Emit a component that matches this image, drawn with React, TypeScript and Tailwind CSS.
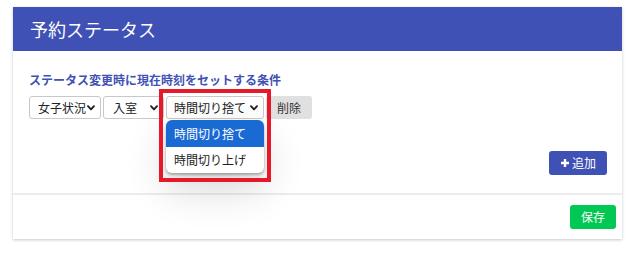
import React from "react";

const Chevron = () => (
  <svg width="8" height="6" viewBox="0 0 8 6" className="shrink-0">
    <polyline points="1,1.2 4,4.4 7,1.2" fill="none" stroke="#222" strokeWidth="1.9" strokeLinecap="round" strokeLinejoin="round" />
  </svg>
);

const Select = ({ label, w, pl }: { label: string; w: string; pl: string }) => (
  <div className={`${w} ${pl} h-[23px] shrink-0 flex items-center justify-between pr-[5px] bg-white border border-[#c8c8c8] rounded-[3px] text-[12px] text-[#222] leading-none whitespace-nowrap`}>
    <span className="whitespace-nowrap">{label}</span>
    <Chevron />
  </div>
);

export default function App() {
  return (
    <div className="w-[640px] h-[264px] bg-white pt-[7px] pl-[13px]" style={{ fontFamily: '"Noto Sans CJK JP", "Noto Sans", sans-serif' }}>
      <div className="w-[609px] h-[232px] flex flex-col bg-white shadow-[0_1px_3px_rgba(0,0,0,0.22)]">
        <div className="h-[44px] shrink-0 bg-[#3f51b5] flex items-center pl-[17px] text-white text-[18px] leading-none">
          予約ステータス
        </div>
        <div className="h-[142px] shrink-0 flex flex-col pl-[16px] pr-[15px] pt-[20px]">
          <div className="text-[12px] leading-[18px] font-bold text-[#3f51b5] whitespace-nowrap">ステータス変更時に現在時刻をセットする条件</div>
          <div className="mt-[7px] flex items-center gap-[2px]">
            <Select label="女子状況" w="w-[72px]" pl="pl-[8px]" />
            <Select label="入室" w="w-[61px]" pl="pl-[9px]" />
            <div className="relative shrink-0">
              <Select label="時間切り捨て" w="w-[98px]" pl="pl-[7px]" />
              <div className="absolute left-0 top-[24px] w-[98px] h-[53px] bg-white rounded-[6px] overflow-hidden shadow-[0_2px_3px_rgba(0,0,0,0.3),0_16px_40px_rgba(0,0,0,0.16)] text-[12px] leading-none z-10 whitespace-nowrap">
                <div className="h-[27px] bg-[#1a6ad4] text-white flex items-center pl-[8px]">時間切り捨て</div>
                <div className="h-[26px] text-[#222] flex items-center pl-[8px]">時間切り上げ</div>
              </div>
              <div className="absolute left-[-7px] top-[-7px] w-[112px] h-[93px] border-[4px] border-[#e5192a] z-20 pointer-events-none" />
            </div>
            <div className="w-[46px] h-[23px] shrink-0 bg-[#e0e0e0] rounded-[3px] flex items-center justify-center text-[12px] text-[#333] leading-none">削除</div>
          </div>
          <div className="mt-[32px] flex justify-end">
            <div className="w-[58px] h-[24px] bg-[#3f51b5] rounded-[3px] flex items-center justify-center gap-[2px] text-white text-[12px] leading-none">
              <svg width="10" height="10" viewBox="0 0 10 10">
                <path d="M5 1v8M1 5h8" stroke="#fff" strokeWidth="2.4" strokeLinecap="butt" />
              </svg>
              <span>追加</span>
            </div>
          </div>
        </div>
        <div className="flex-1 border-t-2 border-[#ececec] flex justify-end items-start pt-[10px] pr-[6px]">
          <div className="w-[46px] h-[24px] bg-[#00c853] rounded-[3px] flex items-center justify-center text-white text-[12px] leading-none">保存</div>
        </div>
      </div>
    </div>
  );
}
